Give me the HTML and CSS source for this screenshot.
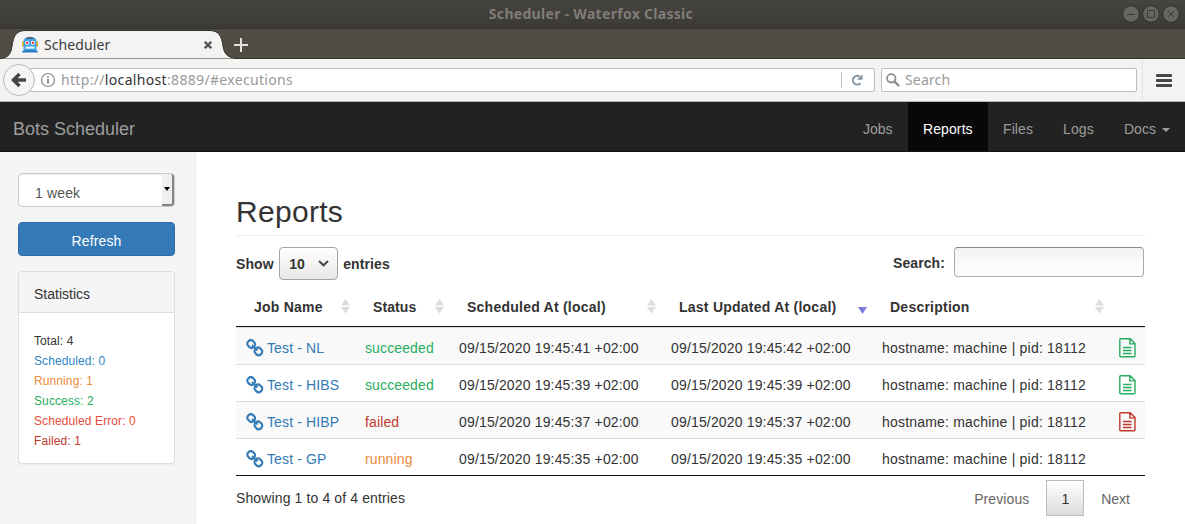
FILE: index.html
```html
<!DOCTYPE html>
<html lang="en">
<head>
<meta charset="utf-8">
<title>Scheduler</title>
<link rel="stylesheet" href="styles.css">
</head>
<body>
<svg class="defs" width="0" height="0">
  <symbol id="link" viewBox="0 0 18 18">
    <g fill="none" stroke="currentColor" stroke-width="2.200">
      <rect x="-3.800" y="-3.400" width="7.600" height="6.800" rx="3" transform="translate(5.200 5) rotate(45)"/>
      <rect x="-3.800" y="-3.400" width="7.600" height="6.800" rx="3" transform="translate(12.400 12.400) rotate(45)"/>
      <path d="M6 6l5.500 5.500" stroke-width="1.800"/>
    </g>
  </symbol>
  <symbol id="file" viewBox="0 0 17 20">
    <path d="M1.800.8h9.400l4.800 4.800v12.200q0 1-1 1H1.800q-1 0-1-1V1.800q0-1 1-1zM10.800.8v5.100h5.200M4 9.500h8.500M4 12.500h8.500M4 15.500h8.500" fill="none" stroke="currentColor" stroke-width="1.400"/>
  </symbol>
  <symbol id="sort" viewBox="0 0 9 15">
    <path d="M4.500 0L9 6.600H0zM0 8h9L4.500 14.600z" fill="#dcdcdc"/>
  </symbol>
</svg>

<header class="titlebar">
  <span class="window-title">Scheduler - Waterfox Classic</span>
  <svg class="window-buttons" width="58" height="18" viewBox="0 0 58 18">
    <g fill="#66655f" stroke="#33322e"><circle cx="9" cy="9" r="8.300"/><circle cx="29" cy="9" r="8.300"/><circle cx="49" cy="9" r="8.300"/></g>
    <path d="M5 9.500h8M25.500 5.500h7v7h-7zM46.200 6.200l5.600 5.600M51.800 6.200l-5.600 5.600" fill="none" stroke="#3a3935"/>
  </svg>
</header>
<div class="tabstrip">
  <svg class="tab-shape" width="237" height="30" viewBox="0 0 237 30">
    <path d="M0 29.500C9 29 11 24 12 17C13.500 7 16 1.500 26 1.500H209C219 1.500 221.500 7 223 17C224 24 227 29 237 29.500V30H0z" fill="#f4f3f1" stroke="#302f2a"/>
  </svg>
  <div class="tab">
    <svg width="18" height="17" viewBox="0 0 18 17">
      <path d="M1 5.500h16v5H1z" fill="#f5a623"/>
      <path d="M2.500 14V4.500q.5-3.500 6.500-3.500t6.500 3.500V14z" fill="#42a5e8"/>
      <path d="M4 3Q9-1.300 14 3z" fill="#456b78"/>
      <circle cx="6.200" cy="6.800" r="2.100" fill="#fff"/><circle cx="11.800" cy="6.800" r="2.100" fill="#fff"/>
      <circle cx="6.200" cy="6.800" r="1.200" fill="#e5302d"/><circle cx="11.800" cy="6.800" r="1.200" fill="#e5302d"/>
      <path d="M4.500 10.500h9v2.200h-9z" fill="#e9f4fb"/><path d="M1 16.500q0-2.500 3-2.500h10q3 0 3 2.500z" fill="#287cc0"/>
    </svg>
    <span class="tab-label">Scheduler</span>
    <svg class="tab-close" width="8" height="8" viewBox="0 0 8 8"><path d="M.8.8l6.400 6.400M7.200.8L.8 7.200" stroke="#555" stroke-width="2.300"/></svg>
  </div>
  <svg class="tab-new" width="14" height="14" viewBox="0 0 14 14"><path d="M7 0v14M0 7h14" stroke="#e3e2de" stroke-width="2"/></svg>
</div>
<div class="toolbar">
  <svg class="back" width="33" height="33" viewBox="0 0 33 33">
    <circle cx="16" cy="16" r="15.500" fill="#f6f5f4" stroke="#b9b8b6"/>
    <path d="M23 16H10.500M16.500 10l-6 6 6 6" fill="none" stroke="#464646" stroke-width="3.400"/>
  </svg>
  <div class="address">
    <svg width="16" height="16" viewBox="0 0 16 16"><circle cx="8" cy="8" r="6.500" fill="none" stroke="#858585" stroke-width="1.200"/><path d="M8 7v4.500M8 4.200v1.600" stroke="#777" stroke-width="1.700"/></svg>
    <span class="url">http://<b>localhost</b>:8889/#executions</span>
    <span class="reload"><svg width="12" height="12" viewBox="0 0 12 12"><path d="M8.600 2.500A4.400 4.400 0 1 0 9.400 9.300" fill="none" stroke="#8495a3" stroke-width="2"/><path d="M11.500.3v5.400H6z" fill="#8495a3"/></svg></span>
  </div>
  <div class="browser-search">
    <svg width="14" height="14" viewBox="0 0 14 14"><circle cx="5.300" cy="5.300" r="4.200" fill="none" stroke="#8d8d8d" stroke-width="1.800"/><path d="M8.300 8.300l4.700 4.700" stroke="#8d8d8d" stroke-width="2.400"/></svg>
    <span>Search</span>
  </div>
  <div class="menu"><i></i><i></i><i></i></div>
</div>

<nav class="navbar">
  <a class="brand">Bots Scheduler</a>
  <a class="jobs">Jobs</a><a class="active">Reports</a><a class="files">Files</a><a class="logs">Logs</a><a class="docs">Docs <span class="caret"></span></a>
</nav>

<div class="page">
  <aside class="sidebar">
    <div class="period"><span>1 week</span><span class="period-arrow"></span></div>
    <div class="refresh">Refresh</div>
    <section class="panel">
      <h2>Statistics</h2>
      <ul>
        <li>Total: 4</li>
        <li class="scheduled">Scheduled: 0</li>
        <li class="running">Running: 1</li>
        <li class="succeeded">Success: 2</li>
        <li class="error">Scheduled Error: 0</li>
        <li class="failed">Failed: 1</li>
      </ul>
    </section>
  </aside>
  <main>
    <h1>Reports</h1>
    <div class="controls">
      <span>Show</span>
      <span class="length">10<svg width="11" height="7" viewBox="0 0 11 7"><path d="M1 1l4.500 4.300L10 1" fill="none" stroke="#464646" stroke-width="2"/></svg></span>
      <span>entries</span>
      <span class="filter-label">Search:</span><span class="filter"></span>
    </div>
    <table>
      <colgroup><col class="c-name"><col class="c-status"><col class="c-sched"><col class="c-upd"><col class="c-desc"><col class="c-log"></colgroup>
      <thead><tr>
        <th><div>Job Name<svg width="9" height="15"><use href="#sort"/></svg></div></th>
        <th><div>Status<svg width="9" height="15"><use href="#sort"/></svg></div></th>
        <th><div>Scheduled At (local)<svg width="9" height="15"><use href="#sort"/></svg></div></th>
        <th><div>Last Updated At (local)<svg width="9" height="15" viewBox="0 0 9 15"><path d="M0 8h9L4.500 15z" fill="#7c7cdf"/></svg></div></th>
        <th><div>Description<svg width="9" height="15"><use href="#sort"/></svg></div></th>
        <th></th>
      </tr></thead>
      <tbody>
        <tr><td><a><svg width="18" height="18"><use href="#link"/></svg>Test - NL</a></td><td class="succeeded">succeeded</td><td class="date">09/15/2020 19:45:41 +02:00</td><td class="date">09/15/2020 19:45:42 +02:00</td><td class="desc">hostname: machine | pid: 18112</td><td class="succeeded"><svg class="file" width="17" height="20"><use href="#file"/></svg></td></tr>
        <tr><td><a><svg width="18" height="18"><use href="#link"/></svg>Test - HIBS</a></td><td class="succeeded">succeeded</td><td class="date">09/15/2020 19:45:39 +02:00</td><td class="date">09/15/2020 19:45:39 +02:00</td><td class="desc">hostname: machine | pid: 18112</td><td class="succeeded"><svg class="file" width="17" height="20"><use href="#file"/></svg></td></tr>
        <tr><td><a><svg width="18" height="18"><use href="#link"/></svg>Test - HIBP</a></td><td class="failed">failed</td><td class="date">09/15/2020 19:45:37 +02:00</td><td class="date">09/15/2020 19:45:37 +02:00</td><td class="desc">hostname: machine | pid: 18112</td><td class="failed"><svg class="file" width="17" height="20"><use href="#file"/></svg></td></tr>
        <tr><td><a><svg width="18" height="18"><use href="#link"/></svg>Test - GP</a></td><td class="running">running</td><td class="date">09/15/2020 19:45:35 +02:00</td><td class="date">09/15/2020 19:45:35 +02:00</td><td class="desc">hostname: machine | pid: 18112</td><td></td></tr>
      </tbody>
    </table>
    <footer>
      <span class="info">Showing 1 to 4 of 4 entries</span>
      <span class="pager previous">Previous</span><span class="pager current">1</span><span class="pager">Next</span>
    </footer>
  </main>
</div>
</body>
</html>
```
FILE: styles.css
```css
* { box-sizing: border-box; }
body { margin: 0; height: 524px; overflow: hidden; background: #fff; color: #333; font: 14px/20px "Liberation Sans", Arial, sans-serif; }
svg { display: block; flex: none; }
.defs { position: absolute; }

.titlebar { height: 29px; display: flex; align-items: center; justify-content: center; position: relative; background: linear-gradient(#45443f, #3b3a36); border-bottom: 1px solid #34332f; font: bold 14px/20px "Noto Sans", sans-serif; color: #807d78; }
.window-title { letter-spacing: 0.3px; margin-left: -3px; }
.window-buttons { position: absolute; right: 5px; top: 5px; }

.tabstrip { height: 30px; position: relative; display: flex; align-items: center; background: #504d45; border-bottom: 1px solid #34322d; }
.tab-shape { position: absolute; left: 0; top: 0; }
.tab { position: relative; display: flex; align-items: center; width: 233px; padding: 2px 21px 0 21px; font: 14px/20px "Noto Sans", sans-serif; color: #3c3c3c; }
.tab-label { margin-left: 5px; flex: 1; letter-spacing: 0.1px; }
.tab-new { position: relative; margin-left: 1px; top: 1px; }

.toolbar { height: 43px; display: flex; align-items: center; background: #f4f3f1; border-bottom: 1px solid #b7b6b4; padding: 0 13px 0 3px; font: 14px/20px "Noto Sans", sans-serif; color: #999; }
.back { position: relative; z-index: 1; }
.address { width: 855px; height: 24px; margin-left: -16px; margin-bottom: 1px; padding-left: 19px; border: 1px solid #bdbcba; border-radius: 2px; background: #fff; display: flex; align-items: center; }
.url { margin-left: 5px; flex: 1; white-space: nowrap; letter-spacing: 0.33px; padding-top: 1px; }
.url b { font-weight: normal; color: #333; }
.reload { width: 33px; height: 16px; border-left: 1px solid #c2c2c2; display: flex; align-items: center; padding-left: 9px; }
.browser-search { width: 256px; height: 24px; margin-left: 6px; margin-bottom: 1px; padding: 0 0 0 4px; border: 1px solid #bdbcba; border-radius: 2px; background: #fff; display: flex; align-items: center; gap: 5px; letter-spacing: 0.15px; }
.browser-search span { padding-top: 1px; }
.menu { height: 38px; margin-left: auto; padding-left: 13px; border-left: 1px solid #e3e2e0; display: grid; align-content: center; gap: 2px; }
.menu i { width: 16px; height: 3px; border-radius: 1px; background: #464646; }

.navbar { height: 50px; display: flex; background: #222; border-bottom: 1px solid #101010; color: #9d9d9d; }
.navbar a { padding: 17px 0 12px 15px; white-space: nowrap; }
.navbar .brand { margin-right: auto; padding-left: 13px; font-size: 18px; }
.navbar .jobs { width: 60px; }
.navbar .active { width: 80px; background: #080808; color: #fff; letter-spacing: 0.1px; }
.navbar .files, .navbar .logs { width: 60px; letter-spacing: 0.1px; }
.navbar .docs { width: 77px; padding-left: 16px; }
.caret { display: inline-block; margin-left: 2px; vertical-align: middle; border: 4px solid transparent; border-top-color: currentColor; border-bottom: 0; }

.page { display: flex; height: 372px; }
.sidebar { width: 196px; padding: 21px 20px 0 18px; background: #f5f5f5; border-right: 1px solid #eee; }
.period { height: 34px; display: flex; border: 1px solid #ccc; border-radius: 4px; background: #fff; color: #555; padding-left: 16px; line-height: 38px; letter-spacing: 0.15px; box-shadow: inset 0 1px 1px rgba(0,0,0,.075); }
.period-arrow { margin-left: auto; width: 12px; border: solid #858585; border-width: 0 2px 2px 0; border-radius: 0 3px 3px 0; background: #efefef; display: flex; align-items: center; justify-content: center; }
.period-arrow::after { content: ""; border: 3px solid transparent; border-top: 4px solid #000; border-bottom: 0; }
.refresh { height: 34px; margin-top: 15px; border: 1px solid #2e6da4; border-radius: 4px; background: #337ab7; color: #fff; text-align: center; line-height: 36px; letter-spacing: 0.15px; }
.panel { height: 193px; margin-top: 15px; background: #fff; border: 1px solid #ddd; border-radius: 4px; box-shadow: 0 1px 1px rgba(0,0,0,.05); }
.panel h2 { margin: 0; height: 41px; padding: 12px 15px 8px; font-size: 14px; line-height: 20px; font-weight: normal; background: #f5f5f5; border-bottom: 1px solid #ddd; border-radius: 3px 3px 0 0; }
.panel ul { list-style: none; margin: 0; padding: 18px 15px; font-size: 12px; letter-spacing: 0.1px; }
.scheduled { color: #2f86c5; }
.running { color: #e98b39; }
.succeeded { color: #27ae60; }
.error { color: #e74c3c; }
.failed { color: #c0392b; }

main { flex: 1; padding: 41px 40px 0; }
h1 { margin: 0; height: 43px; padding-top: 2px; border-bottom: 1px solid #eee; font-size: 30px; font-weight: normal; line-height: 33px; letter-spacing: 0.3px; }
.controls { height: 54px; display: flex; align-items: center; font-weight: bold; padding-top: 1px; letter-spacing: 0.1px; }
.length { width: 59px; height: 33px; margin: 0 5px 1px 5.500px; padding: 1px 8px 0 9px; display: flex; align-items: center; justify-content: space-between; border: 1px solid #a5a5a5; border-radius: 4px; background: linear-gradient(#fff, #e9e8e6); }
.filter-label { margin-left: auto; padding-bottom: 2px; }
.filter { width: 190px; height: 30px; margin: 0 1px 4px 9px; border: 1px solid #aaa; border-top-color: #888; border-radius: 4px; background: linear-gradient(#f3f3f3, #fff); }
table { width: 909px; table-layout: fixed; border-collapse: separate; border-spacing: 0; border-bottom: 1px solid #111; }
.c-name { width: 119px; } .c-status { width: 94px; } .c-sched { width: 212px; } .c-upd { width: 211px; } .c-desc { width: 237px; } .c-log { width: 36px; }
th { height: 37px; padding: 0 5px 2px 18px; border-bottom: 1px solid #111; text-align: left; white-space: nowrap; letter-spacing: 0.24px; }
th:nth-child(2) { letter-spacing: 0.1px; }
th div { display: flex; align-items: center; justify-content: space-between; }
th svg { margin-bottom: 1px; }
td { height: 37px; padding: 4px 10px 0; border-top: 1px solid #ddd; white-space: nowrap; letter-spacing: 0.12px; }
td.date { letter-spacing: 0.16px; }
td.desc { letter-spacing: 0.2px; }
tbody tr:nth-child(odd) { background: #f9f9f9; }
td a { display: flex; align-items: center; gap: 3px; color: #337ab7; }
td a svg { margin-top: -1px; }
td .file { margin: 0 0 0 -0.500px; }
footer { display: flex; align-items: center; padding-top: 4px; }
.info { margin-right: auto; letter-spacing: 0.12px; }
.pager { height: 36px; padding: 9px 15px 0; color: #666; }
.previous { letter-spacing: 0.1px; }
.current { border: 1px solid #bbb; margin: 0 2px; padding: 8px 14px 0; color: #333; background: linear-gradient(#fff, #dcdcdc); }
```
